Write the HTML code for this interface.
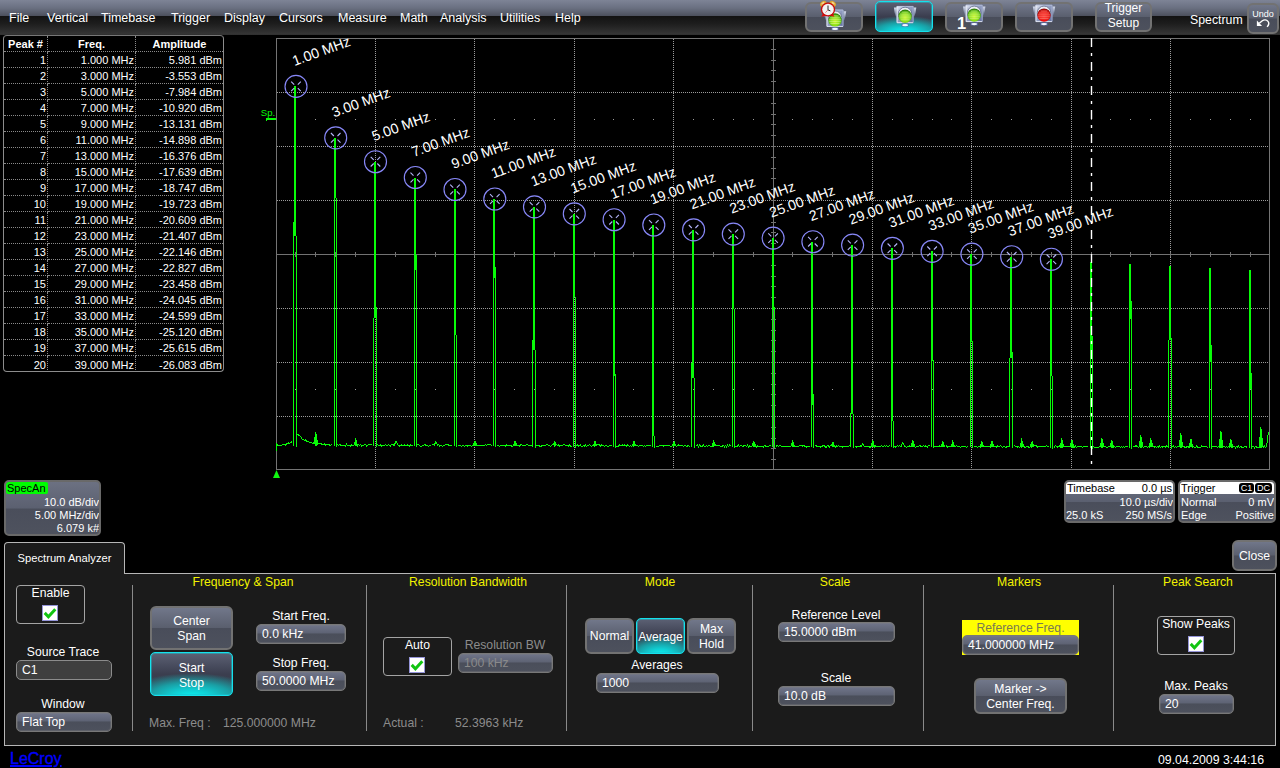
<!DOCTYPE html>
<html lang="en"><head><meta charset="utf-8"><title>LeCroy Spectrum Analyzer</title>
<style>
html,body{margin:0;padding:0;}
body{width:1280px;height:768px;overflow:hidden;background:#000;color:#fff;position:relative;
 font-family:"Liberation Sans",sans-serif;font-size:12.2px;line-height:16px;}
.abs,#menubar,#menubar span,.btn,.fld,.lbl,.hd,.sep,.box,.chk,#graph,#peaks,#panel,#tab,.info{position:absolute;box-sizing:border-box;}
#menubar{left:0;top:0;width:1280px;height:35px;overflow:visible;
 background:linear-gradient(to bottom,#7e8496 0px,#6a7081 8px,#4e525f 15.5px,#131313 16.5px,#1e1e1e 24px,#353535 34px,#2c2c2c 35px);}
#menubar span.mi{top:10px;font-size:12.5px;color:#fff;white-space:nowrap;}
.btn{border:2px solid #727272;border-radius:6px;background-clip:padding-box;color:#fff;text-align:center;white-space:nowrap;display:flex;flex-direction:column;justify-content:center;align-items:center;
 background:linear-gradient(to bottom,#71778a 0%,#5a5f6e 49%,#494d5a 51%,#4d515d 100%);}
.btn.on{border:1px solid #14e2ec;box-shadow:inset 0 0 0 1px rgba(30,190,205,.5);border-radius:5px;
 background:radial-gradient(ellipse 85% 56% at 50% 104%,#08f4f4 0%,#10cdd2 30%,#1a9ea4 60%,rgba(40,80,92,0) 100%),
 linear-gradient(to bottom,#5c6174 0%,#3b3e4f 50%,#393c4a 100%);}
.fld{border:1px solid #787878;box-shadow:inset 0 0 0 1px rgba(125,125,125,.35);border-radius:5px;color:#fff;padding-left:5px;white-space:nowrap;
 background:linear-gradient(to bottom,#70758a 0%,#5e6374 44%,#4a4e5a 50%,#4d515d 100%);font-size:12.2px;line-height:17px;padding-top:1px;}
.fld.dark{background:#3f3f3f;border-color:#8c8c8c;box-shadow:none;}
.fld.dis{color:#8a8a8a;}
.lbl{color:#fff;text-align:center;white-space:nowrap;font-size:12.2px;line-height:15px;}
.lbl.g{color:#8c8c8c;}
.hd{color:#f2f200;text-align:center;white-space:nowrap;font-size:12.2px;line-height:15px;}
.sep{width:1px;top:585px;height:146px;background:#8a8a8a;}
.box{border:1px solid #a4a4a4;border-radius:4px;background:transparent;}
.chk{width:16px;height:16px;background:#fff;border:1px solid #9494d8;}
.chk svg{position:absolute;left:0;top:0;}
#panel{left:4px;top:573px;width:1272px;height:173px;background:#1b1b1b;border:1px solid #b6b6b6;}
#tab{left:4px;top:542px;width:121px;height:32px;background:#1b1b1b;border:1px solid #b6b6b6;border-bottom:none;border-radius:4px 4px 0 0;
 text-align:center;font-size:11.2px;line-height:30px;color:#fff;}
#graph{left:0;top:0;}
#graph text{font-family:"Liberation Sans",sans-serif;}
#graph text.pk{font-size:14.2px;fill:#fff;}
#peaks{left:3px;top:35px;width:221px;height:337px;border:1px solid #8c8c8c;border-top-color:#777;border-radius:4px;overflow:hidden;background:#000;}
#peaks table{border-collapse:separate;border-spacing:0;table-layout:fixed;width:219px;position:absolute;left:0;top:0;}
#peaks td,#peaks th{height:16px;padding:2px 1px 0 0;font-size:11px;line-height:13px;text-align:right;color:#fff;white-space:nowrap;
 border-right:1px dotted #8a8a8a;border-bottom:1px dotted #8a8a8a;box-sizing:border-box;overflow:hidden;}
#peaks th{text-align:center;font-weight:bold;padding:2px 0 0 0;}
#peaks td:last-child,#peaks th:last-child{border-right:none;}
#peaks tr:last-child td{border-bottom:none;}
.info{border:2px solid #696969;border-radius:5px;background-clip:padding-box;font-size:11px;line-height:12px;color:#fff;overflow:hidden;
 background:linear-gradient(to bottom,#6c7182 0%,#5b6070 50%,#4a4e5b 52%,#4e525e 100%);}
.info span{position:absolute;white-space:nowrap;}

</style></head>
<body>
<div id="menubar">
<span class="mi" style="left:9px">File</span>
<span class="mi" style="left:47px">Vertical</span>
<span class="mi" style="left:101px">Timebase</span>
<span class="mi" style="left:171px">Trigger</span>
<span class="mi" style="left:224px">Display</span>
<span class="mi" style="left:279px">Cursors</span>
<span class="mi" style="left:338px">Measure</span>
<span class="mi" style="left:400px">Math</span>
<span class="mi" style="left:440px">Analysis</span>
<span class="mi" style="left:500px">Utilities</span>
<span class="mi" style="left:555px">Help</span>
<div class="btn" style="left:805px;top:2px;width:58px;height:30px"></div>
<div class="btn on" style="left:875px;top:1px;width:58px;height:31px"></div>
<div class="btn" style="left:945px;top:2px;width:58px;height:30px"></div>
<div class="btn" style="left:1015px;top:2px;width:58px;height:30px"></div>
<div class="btn" style="left:1095px;top:2px;width:57px;height:30px;font-size:12px;line-height:15px;padding-bottom:2px">Trigger<br>Setup</div>
<span class="mi" style="left:1190px;top:12px;font-size:12.3px">Spectrum</span>
<div class="btn" style="left:1247px;top:3px;width:32px;height:31px;font-size:9px;line-height:11px;justify-content:flex-start;padding-top:4px">Undo</div>
<span class="abs" style="left:957px;top:15px;font-size:16.5px;line-height:17px;font-weight:bold;color:#fff">1</span>
<svg class="abs" style="left:800px;top:0" width="480" height="36" viewBox="800 0 480 36">
<defs>
<linearGradient id="tlb" x1="0" y1="0" x2="1" y2="1"><stop offset="0" stop-color="#f0f3fb"/><stop offset="0.3" stop-color="#a2accb"/><stop offset="1" stop-color="#5d6c9b"/></linearGradient>
<linearGradient id="ear" x1="0" y1="0" x2="0" y2="1"><stop offset="0" stop-color="#d4dbec"/><stop offset="1" stop-color="#5c6886"/></linearGradient>
<radialGradient id="lg" cx="0.5" cy="0.62" r="0.56"><stop offset="0" stop-color="#c8f626"/><stop offset="0.55" stop-color="#8ee018"/><stop offset="0.85" stop-color="#56b60e"/><stop offset="1" stop-color="#2f7f0a"/></radialGradient>
<radialGradient id="lr" cx="0.5" cy="0.6" r="0.56"><stop offset="0" stop-color="#ff2a2a"/><stop offset="0.6" stop-color="#f00c0c"/><stop offset="0.88" stop-color="#c40808"/><stop offset="1" stop-color="#860606"/></radialGradient>
<g id="tlbody">
<path d="M0.6,1.6 L3.4,1.6 L3.4,10.8 L2.4,10.4 L1.3,6.5 Z M23,1.6 L20.2,1.6 L20.2,10.8 L21.2,10.4 L22.3,6.5 Z" fill="url(#ear)"/>
<rect x="3.3" y="0" width="17" height="17.3" rx="0.9" fill="url(#tlb)"/>
<path d="M3.8,0.6 L3.8,16.8 L19.8,16.8" fill="none" stroke="#e9edf8" stroke-width="0.9"/>
<path d="M3.8,0.5 L19.8,0.5 L19.8,16.6" fill="none" stroke="#b8c2de" stroke-width="0.7"/>
<circle cx="11.8" cy="8.0" r="6.7" fill="#eceef5" stroke="#626c88" stroke-width="0.8"/>
<rect x="8.3" y="17.6" width="7" height="3" fill="#5a6cab"/>
<ellipse cx="11.8" cy="19.3" rx="3" ry="1.1" fill="#f4f7ff"/>
</g>
<g id="stripes" stroke="#f6ffd8" stroke-opacity="0.55" stroke-width="0.7">
<line x1="8.4" y1="6.3" x2="15.2" y2="6.3"/><line x1="6.6" y1="8.2" x2="17" y2="8.2"/><line x1="5.8" y1="10.1" x2="17.8" y2="10.1"/><line x1="6" y1="12" x2="17.6" y2="12"/><line x1="7.2" y1="13.9" x2="16.4" y2="13.9"/>
</g>
<g id="tlg"><use href="#tlbody"/><circle cx="11.8" cy="10.3" r="6.7" fill="url(#lg)"/><use href="#stripes"/></g>
<g id="tlr"><use href="#tlbody"/><circle cx="11.8" cy="10.3" r="6.7" fill="url(#lr)"/><use href="#stripes"/></g>
</defs>
<use href="#tlg" x="823.2" y="9.6"/>
<use href="#tlg" x="893.3" y="5.9"/>
<use href="#tlg" x="962.4" y="4.8"/>
<use href="#tlr" x="1032.2" y="4.8"/>
<!-- alarm clock -->
<g transform="translate(828,9.5)">
<ellipse cx="-4.7" cy="-5.7" rx="3.5" ry="2.6" transform="rotate(-38 -4.7 -5.7)" fill="#dca432"/>
<ellipse cx="4.7" cy="-5.7" rx="3.5" ry="2.6" transform="rotate(38 4.7 -5.7)" fill="#dca432"/>
<ellipse cx="-5.1" cy="-6.3" rx="1.8" ry="1" transform="rotate(-38 -5.1 -6.3)" fill="#f2d58c"/>
<ellipse cx="5.1" cy="-6.3" rx="1.8" ry="1" transform="rotate(38 5.1 -6.3)" fill="#f2d58c"/>
<path d="M-4.6,3.6 L-6.8,7.2 L-2.8,6.4 Z M4.6,3.6 L6.4,7.2 L2.8,6.4 Z" fill="#e00c0c"/>
<circle r="7.1" fill="#c80a0a"/>
<circle r="5.8" fill="#f3f4f4"/>
<path d="M0,0.4 L0,-4 M0,0.4 L2.4,1.4" stroke="#2a2a2a" stroke-width="1" fill="none"/>
<path d="M0,0.4 L-2.6,3.2" stroke="#e04040" stroke-width="0.6" fill="none"/>
</g>
<!-- undo arrow -->
<path d="M1256.9,20.6 L1256.9,25.9 L1262.1,25.9 Z" fill="#ffffff"/><path d="M1259.3,23.3 L1262.3,20.8 C1264,19.6 1266.6,19.8 1268,21.4 C1269.4,23 1268.6,25.2 1267.1,26.9" fill="none" stroke="#ffffff" stroke-width="1.4"/>
</svg>
</div>
<div id="peaks"><table>
<colgroup><col style="width:44px"><col style="width:88px"><col style="width:87px"></colgroup>
<tr><th>Peak #</th><th>Freq.</th><th>Amplitude</th></tr>
<tr><td>1</td><td>1.000 MHz</td><td>5.981 dBm</td></tr>
<tr><td>2</td><td>3.000 MHz</td><td>-3.553 dBm</td></tr>
<tr><td>3</td><td>5.000 MHz</td><td>-7.984 dBm</td></tr>
<tr><td>4</td><td>7.000 MHz</td><td>-10.920 dBm</td></tr>
<tr><td>5</td><td>9.000 MHz</td><td>-13.131 dBm</td></tr>
<tr><td>6</td><td>11.000 MHz</td><td>-14.898 dBm</td></tr>
<tr><td>7</td><td>13.000 MHz</td><td>-16.376 dBm</td></tr>
<tr><td>8</td><td>15.000 MHz</td><td>-17.639 dBm</td></tr>
<tr><td>9</td><td>17.000 MHz</td><td>-18.747 dBm</td></tr>
<tr><td>10</td><td>19.000 MHz</td><td>-19.723 dBm</td></tr>
<tr><td>11</td><td>21.000 MHz</td><td>-20.609 dBm</td></tr>
<tr><td>12</td><td>23.000 MHz</td><td>-21.407 dBm</td></tr>
<tr><td>13</td><td>25.000 MHz</td><td>-22.146 dBm</td></tr>
<tr><td>14</td><td>27.000 MHz</td><td>-22.827 dBm</td></tr>
<tr><td>15</td><td>29.000 MHz</td><td>-23.458 dBm</td></tr>
<tr><td>16</td><td>31.000 MHz</td><td>-24.045 dBm</td></tr>
<tr><td>17</td><td>33.000 MHz</td><td>-24.599 dBm</td></tr>
<tr><td>18</td><td>35.000 MHz</td><td>-25.120 dBm</td></tr>
<tr><td>19</td><td>37.000 MHz</td><td>-25.615 dBm</td></tr>
<tr><td>20</td><td>39.000 MHz</td><td>-26.083 dBm</td></tr>
</table></div>
<svg id="graph" width="1280" height="480" viewBox="0 0 1280 480">
<g shape-rendering="crispEdges" fill="none">
<line x1="375.5" y1="39" x2="375.5" y2="469" stroke="#9c9c9c" stroke-dasharray="1 1"/>
<line x1="474.5" y1="39" x2="474.5" y2="469" stroke="#9c9c9c" stroke-dasharray="1 1"/>
<line x1="574.5" y1="39" x2="574.5" y2="469" stroke="#9c9c9c" stroke-dasharray="1 1"/>
<line x1="673.5" y1="39" x2="673.5" y2="469" stroke="#9c9c9c" stroke-dasharray="1 1"/>
<line x1="872.5" y1="39" x2="872.5" y2="469" stroke="#9c9c9c" stroke-dasharray="1 1"/>
<line x1="971.5" y1="39" x2="971.5" y2="469" stroke="#9c9c9c" stroke-dasharray="1 1"/>
<line x1="1071.5" y1="39" x2="1071.5" y2="469" stroke="#9c9c9c" stroke-dasharray="1 1"/>
<line x1="1170.5" y1="39" x2="1170.5" y2="469" stroke="#9c9c9c" stroke-dasharray="1 1"/>
<line x1="277" y1="92.5" x2="1269" y2="92.5" stroke="#9c9c9c" stroke-dasharray="1 1"/>
<line x1="277" y1="146.5" x2="1269" y2="146.5" stroke="#9c9c9c" stroke-dasharray="1 1"/>
<line x1="277" y1="200.5" x2="1269" y2="200.5" stroke="#9c9c9c" stroke-dasharray="1 1"/>
<line x1="277" y1="308.5" x2="1269" y2="308.5" stroke="#9c9c9c" stroke-dasharray="1 1"/>
<line x1="277" y1="362.5" x2="1269" y2="362.5" stroke="#9c9c9c" stroke-dasharray="1 1"/>
<line x1="277" y1="416.5" x2="1269" y2="416.5" stroke="#9c9c9c" stroke-dasharray="1 1"/>
<rect x="295" y="119" width="1" height="1" fill="#9c9c9c"/>
<rect x="315" y="119" width="1" height="1" fill="#9c9c9c"/>
<rect x="335" y="119" width="1" height="1" fill="#9c9c9c"/>
<rect x="355" y="119" width="1" height="1" fill="#9c9c9c"/>
<rect x="395" y="119" width="1" height="1" fill="#9c9c9c"/>
<rect x="415" y="119" width="1" height="1" fill="#9c9c9c"/>
<rect x="435" y="119" width="1" height="1" fill="#9c9c9c"/>
<rect x="454" y="119" width="1" height="1" fill="#9c9c9c"/>
<rect x="494" y="119" width="1" height="1" fill="#9c9c9c"/>
<rect x="514" y="119" width="1" height="1" fill="#9c9c9c"/>
<rect x="534" y="119" width="1" height="1" fill="#9c9c9c"/>
<rect x="554" y="119" width="1" height="1" fill="#9c9c9c"/>
<rect x="594" y="119" width="1" height="1" fill="#9c9c9c"/>
<rect x="613" y="119" width="1" height="1" fill="#9c9c9c"/>
<rect x="633" y="119" width="1" height="1" fill="#9c9c9c"/>
<rect x="653" y="119" width="1" height="1" fill="#9c9c9c"/>
<rect x="693" y="119" width="1" height="1" fill="#9c9c9c"/>
<rect x="713" y="119" width="1" height="1" fill="#9c9c9c"/>
<rect x="733" y="119" width="1" height="1" fill="#9c9c9c"/>
<rect x="753" y="119" width="1" height="1" fill="#9c9c9c"/>
<rect x="792" y="119" width="1" height="1" fill="#9c9c9c"/>
<rect x="812" y="119" width="1" height="1" fill="#9c9c9c"/>
<rect x="832" y="119" width="1" height="1" fill="#9c9c9c"/>
<rect x="852" y="119" width="1" height="1" fill="#9c9c9c"/>
<rect x="892" y="119" width="1" height="1" fill="#9c9c9c"/>
<rect x="912" y="119" width="1" height="1" fill="#9c9c9c"/>
<rect x="932" y="119" width="1" height="1" fill="#9c9c9c"/>
<rect x="951" y="119" width="1" height="1" fill="#9c9c9c"/>
<rect x="991" y="119" width="1" height="1" fill="#9c9c9c"/>
<rect x="1011" y="119" width="1" height="1" fill="#9c9c9c"/>
<rect x="1031" y="119" width="1" height="1" fill="#9c9c9c"/>
<rect x="1051" y="119" width="1" height="1" fill="#9c9c9c"/>
<rect x="1091" y="119" width="1" height="1" fill="#9c9c9c"/>
<rect x="1110" y="119" width="1" height="1" fill="#9c9c9c"/>
<rect x="1130" y="119" width="1" height="1" fill="#9c9c9c"/>
<rect x="1150" y="119" width="1" height="1" fill="#9c9c9c"/>
<rect x="1190" y="119" width="1" height="1" fill="#9c9c9c"/>
<rect x="1210" y="119" width="1" height="1" fill="#9c9c9c"/>
<rect x="1230" y="119" width="1" height="1" fill="#9c9c9c"/>
<rect x="1250" y="119" width="1" height="1" fill="#9c9c9c"/>
<rect x="295" y="389" width="1" height="1" fill="#9c9c9c"/>
<rect x="315" y="389" width="1" height="1" fill="#9c9c9c"/>
<rect x="335" y="389" width="1" height="1" fill="#9c9c9c"/>
<rect x="355" y="389" width="1" height="1" fill="#9c9c9c"/>
<rect x="395" y="389" width="1" height="1" fill="#9c9c9c"/>
<rect x="415" y="389" width="1" height="1" fill="#9c9c9c"/>
<rect x="435" y="389" width="1" height="1" fill="#9c9c9c"/>
<rect x="454" y="389" width="1" height="1" fill="#9c9c9c"/>
<rect x="494" y="389" width="1" height="1" fill="#9c9c9c"/>
<rect x="514" y="389" width="1" height="1" fill="#9c9c9c"/>
<rect x="534" y="389" width="1" height="1" fill="#9c9c9c"/>
<rect x="554" y="389" width="1" height="1" fill="#9c9c9c"/>
<rect x="594" y="389" width="1" height="1" fill="#9c9c9c"/>
<rect x="613" y="389" width="1" height="1" fill="#9c9c9c"/>
<rect x="633" y="389" width="1" height="1" fill="#9c9c9c"/>
<rect x="653" y="389" width="1" height="1" fill="#9c9c9c"/>
<rect x="693" y="389" width="1" height="1" fill="#9c9c9c"/>
<rect x="713" y="389" width="1" height="1" fill="#9c9c9c"/>
<rect x="733" y="389" width="1" height="1" fill="#9c9c9c"/>
<rect x="753" y="389" width="1" height="1" fill="#9c9c9c"/>
<rect x="792" y="389" width="1" height="1" fill="#9c9c9c"/>
<rect x="812" y="389" width="1" height="1" fill="#9c9c9c"/>
<rect x="832" y="389" width="1" height="1" fill="#9c9c9c"/>
<rect x="852" y="389" width="1" height="1" fill="#9c9c9c"/>
<rect x="892" y="389" width="1" height="1" fill="#9c9c9c"/>
<rect x="912" y="389" width="1" height="1" fill="#9c9c9c"/>
<rect x="932" y="389" width="1" height="1" fill="#9c9c9c"/>
<rect x="951" y="389" width="1" height="1" fill="#9c9c9c"/>
<rect x="991" y="389" width="1" height="1" fill="#9c9c9c"/>
<rect x="1011" y="389" width="1" height="1" fill="#9c9c9c"/>
<rect x="1031" y="389" width="1" height="1" fill="#9c9c9c"/>
<rect x="1051" y="389" width="1" height="1" fill="#9c9c9c"/>
<rect x="1091" y="389" width="1" height="1" fill="#9c9c9c"/>
<rect x="1110" y="389" width="1" height="1" fill="#9c9c9c"/>
<rect x="1130" y="389" width="1" height="1" fill="#9c9c9c"/>
<rect x="1150" y="389" width="1" height="1" fill="#9c9c9c"/>
<rect x="1190" y="389" width="1" height="1" fill="#9c9c9c"/>
<rect x="1210" y="389" width="1" height="1" fill="#9c9c9c"/>
<rect x="1230" y="389" width="1" height="1" fill="#9c9c9c"/>
<rect x="1250" y="389" width="1" height="1" fill="#9c9c9c"/>
<line x1="773.5" y1="39" x2="773.5" y2="469" stroke="#727272"/>
<line x1="277" y1="254.5" x2="1269" y2="254.5" stroke="#727272"/>
<line x1="295.5" y1="252.0" x2="295.5" y2="257.0" stroke="#727272"/>
<line x1="315.5" y1="252.0" x2="315.5" y2="257.0" stroke="#727272"/>
<line x1="335.5" y1="252.0" x2="335.5" y2="257.0" stroke="#727272"/>
<line x1="355.5" y1="252.0" x2="355.5" y2="257.0" stroke="#727272"/>
<line x1="375.5" y1="252.0" x2="375.5" y2="257.0" stroke="#727272"/>
<line x1="395.5" y1="252.0" x2="395.5" y2="257.0" stroke="#727272"/>
<line x1="415.5" y1="252.0" x2="415.5" y2="257.0" stroke="#727272"/>
<line x1="435.5" y1="252.0" x2="435.5" y2="257.0" stroke="#727272"/>
<line x1="454.5" y1="252.0" x2="454.5" y2="257.0" stroke="#727272"/>
<line x1="474.5" y1="252.0" x2="474.5" y2="257.0" stroke="#727272"/>
<line x1="494.5" y1="252.0" x2="494.5" y2="257.0" stroke="#727272"/>
<line x1="514.5" y1="252.0" x2="514.5" y2="257.0" stroke="#727272"/>
<line x1="534.5" y1="252.0" x2="534.5" y2="257.0" stroke="#727272"/>
<line x1="554.5" y1="252.0" x2="554.5" y2="257.0" stroke="#727272"/>
<line x1="574.5" y1="252.0" x2="574.5" y2="257.0" stroke="#727272"/>
<line x1="594.5" y1="252.0" x2="594.5" y2="257.0" stroke="#727272"/>
<line x1="613.5" y1="252.0" x2="613.5" y2="257.0" stroke="#727272"/>
<line x1="633.5" y1="252.0" x2="633.5" y2="257.0" stroke="#727272"/>
<line x1="653.5" y1="252.0" x2="653.5" y2="257.0" stroke="#727272"/>
<line x1="673.5" y1="252.0" x2="673.5" y2="257.0" stroke="#727272"/>
<line x1="693.5" y1="252.0" x2="693.5" y2="257.0" stroke="#727272"/>
<line x1="713.5" y1="252.0" x2="713.5" y2="257.0" stroke="#727272"/>
<line x1="733.5" y1="252.0" x2="733.5" y2="257.0" stroke="#727272"/>
<line x1="753.5" y1="252.0" x2="753.5" y2="257.0" stroke="#727272"/>
<line x1="773.5" y1="252.0" x2="773.5" y2="257.0" stroke="#727272"/>
<line x1="792.5" y1="252.0" x2="792.5" y2="257.0" stroke="#727272"/>
<line x1="812.5" y1="252.0" x2="812.5" y2="257.0" stroke="#727272"/>
<line x1="832.5" y1="252.0" x2="832.5" y2="257.0" stroke="#727272"/>
<line x1="852.5" y1="252.0" x2="852.5" y2="257.0" stroke="#727272"/>
<line x1="872.5" y1="252.0" x2="872.5" y2="257.0" stroke="#727272"/>
<line x1="892.5" y1="252.0" x2="892.5" y2="257.0" stroke="#727272"/>
<line x1="912.5" y1="252.0" x2="912.5" y2="257.0" stroke="#727272"/>
<line x1="932.5" y1="252.0" x2="932.5" y2="257.0" stroke="#727272"/>
<line x1="951.5" y1="252.0" x2="951.5" y2="257.0" stroke="#727272"/>
<line x1="971.5" y1="252.0" x2="971.5" y2="257.0" stroke="#727272"/>
<line x1="991.5" y1="252.0" x2="991.5" y2="257.0" stroke="#727272"/>
<line x1="1011.5" y1="252.0" x2="1011.5" y2="257.0" stroke="#727272"/>
<line x1="1031.5" y1="252.0" x2="1031.5" y2="257.0" stroke="#727272"/>
<line x1="1051.5" y1="252.0" x2="1051.5" y2="257.0" stroke="#727272"/>
<line x1="1071.5" y1="252.0" x2="1071.5" y2="257.0" stroke="#727272"/>
<line x1="1091.5" y1="252.0" x2="1091.5" y2="257.0" stroke="#727272"/>
<line x1="1110.5" y1="252.0" x2="1110.5" y2="257.0" stroke="#727272"/>
<line x1="1130.5" y1="252.0" x2="1130.5" y2="257.0" stroke="#727272"/>
<line x1="1150.5" y1="252.0" x2="1150.5" y2="257.0" stroke="#727272"/>
<line x1="1170.5" y1="252.0" x2="1170.5" y2="257.0" stroke="#727272"/>
<line x1="1190.5" y1="252.0" x2="1190.5" y2="257.0" stroke="#727272"/>
<line x1="1210.5" y1="252.0" x2="1210.5" y2="257.0" stroke="#727272"/>
<line x1="1230.5" y1="252.0" x2="1230.5" y2="257.0" stroke="#727272"/>
<line x1="1250.5" y1="252.0" x2="1250.5" y2="257.0" stroke="#727272"/>
<line x1="771.0" y1="49.5" x2="776.0" y2="49.5" stroke="#727272"/>
<line x1="771.0" y1="60.5" x2="776.0" y2="60.5" stroke="#727272"/>
<line x1="771.0" y1="70.5" x2="776.0" y2="70.5" stroke="#727272"/>
<line x1="771.0" y1="81.5" x2="776.0" y2="81.5" stroke="#727272"/>
<line x1="771.0" y1="92.5" x2="776.0" y2="92.5" stroke="#727272"/>
<line x1="771.0" y1="103.5" x2="776.0" y2="103.5" stroke="#727272"/>
<line x1="771.0" y1="114.5" x2="776.0" y2="114.5" stroke="#727272"/>
<line x1="771.0" y1="124.5" x2="776.0" y2="124.5" stroke="#727272"/>
<line x1="771.0" y1="135.5" x2="776.0" y2="135.5" stroke="#727272"/>
<line x1="771.0" y1="146.5" x2="776.0" y2="146.5" stroke="#727272"/>
<line x1="771.0" y1="157.5" x2="776.0" y2="157.5" stroke="#727272"/>
<line x1="771.0" y1="168.5" x2="776.0" y2="168.5" stroke="#727272"/>
<line x1="771.0" y1="178.5" x2="776.0" y2="178.5" stroke="#727272"/>
<line x1="771.0" y1="189.5" x2="776.0" y2="189.5" stroke="#727272"/>
<line x1="771.0" y1="200.5" x2="776.0" y2="200.5" stroke="#727272"/>
<line x1="771.0" y1="211.5" x2="776.0" y2="211.5" stroke="#727272"/>
<line x1="771.0" y1="222.5" x2="776.0" y2="222.5" stroke="#727272"/>
<line x1="771.0" y1="232.5" x2="776.0" y2="232.5" stroke="#727272"/>
<line x1="771.0" y1="243.5" x2="776.0" y2="243.5" stroke="#727272"/>
<line x1="771.0" y1="254.5" x2="776.0" y2="254.5" stroke="#727272"/>
<line x1="771.0" y1="265.5" x2="776.0" y2="265.5" stroke="#727272"/>
<line x1="771.0" y1="276.5" x2="776.0" y2="276.5" stroke="#727272"/>
<line x1="771.0" y1="286.5" x2="776.0" y2="286.5" stroke="#727272"/>
<line x1="771.0" y1="297.5" x2="776.0" y2="297.5" stroke="#727272"/>
<line x1="771.0" y1="308.5" x2="776.0" y2="308.5" stroke="#727272"/>
<line x1="771.0" y1="319.5" x2="776.0" y2="319.5" stroke="#727272"/>
<line x1="771.0" y1="330.5" x2="776.0" y2="330.5" stroke="#727272"/>
<line x1="771.0" y1="340.5" x2="776.0" y2="340.5" stroke="#727272"/>
<line x1="771.0" y1="351.5" x2="776.0" y2="351.5" stroke="#727272"/>
<line x1="771.0" y1="362.5" x2="776.0" y2="362.5" stroke="#727272"/>
<line x1="771.0" y1="373.5" x2="776.0" y2="373.5" stroke="#727272"/>
<line x1="771.0" y1="384.5" x2="776.0" y2="384.5" stroke="#727272"/>
<line x1="771.0" y1="394.5" x2="776.0" y2="394.5" stroke="#727272"/>
<line x1="771.0" y1="405.5" x2="776.0" y2="405.5" stroke="#727272"/>
<line x1="771.0" y1="416.5" x2="776.0" y2="416.5" stroke="#727272"/>
<line x1="771.0" y1="427.5" x2="776.0" y2="427.5" stroke="#727272"/>
<line x1="771.0" y1="438.5" x2="776.0" y2="438.5" stroke="#727272"/>
<line x1="771.0" y1="448.5" x2="776.0" y2="448.5" stroke="#727272"/>
<line x1="771.0" y1="459.5" x2="776.0" y2="459.5" stroke="#727272"/>
<rect x="276.5" y="38.5" width="993" height="431" stroke="#747474"/>
</g>
<polyline points="276.5,451.0 276.5,444.0 277.5,445.0 278.5,445.9 279.5,445.2 280.5,445.6 281.5,445.5 282.5,444.5 283.5,444.4 284.5,444.4 285.5,445.0 286.5,444.1 287.5,443.3 288.5,443.0 289.5,443.8 290.5,442.7 291.5,441.9 292.5,441.7" fill="none" stroke="#08fa08" stroke-width="1" shape-rendering="crispEdges"/>
<polyline points="297.5,433.8 298.5,435.0 299.5,435.8 300.5,436.2 301.5,438.1 302.5,439.5 303.5,439.8 304.5,440.4 305.5,439.6 306.5,441.1 307.5,441.4 308.5,441.8 309.5,442.6 310.5,442.9 311.5,442.9 312.5,443.5 313.5,442.9 314.5,443.6 315.5,431.8 316.5,435.3 317.5,444.1 318.5,443.2 319.5,443.3 320.5,443.4 321.5,444.0 322.5,444.1 323.5,444.7 324.5,443.7 325.5,445.5 326.5,444.7 327.5,444.7 328.5,444.7 329.5,445.0 330.5,445.7 331.5,444.6 332.5,445.1" fill="none" stroke="#08fa08" stroke-width="1" shape-rendering="crispEdges"/>
<polyline points="337.5,444.2 338.5,445.5 339.5,444.2 340.5,445.1 341.5,445.6 342.5,445.1 343.5,445.1 344.5,445.3 345.5,446.0 346.5,444.3 347.5,445.6 348.5,445.1 349.5,445.1 350.5,446.0 351.5,444.9 352.5,445.4 353.5,445.2 354.5,444.4 355.5,439.4 356.5,441.1 357.5,446.1 358.5,444.4 359.5,445.2 360.5,444.4 361.5,446.1 362.5,445.2 363.5,445.2 364.5,444.4 365.5,444.4 366.5,446.1 367.5,445.7 368.5,444.4 369.5,444.9 370.5,444.9 371.5,444.4 372.5,445.2" fill="none" stroke="#08fa08" stroke-width="1" shape-rendering="crispEdges"/>
<polyline points="377.5,444.4 378.5,445.4 379.5,445.7 380.5,444.9 381.5,446.1 382.5,445.7 383.5,445.2 384.5,445.2 385.5,444.4 386.5,445.2 387.5,445.2 388.5,444.4 389.5,445.2 390.5,446.1 391.5,444.4 392.5,444.9 393.5,444.9 394.5,445.7 395.5,441.4 396.5,441.9 397.5,444.4 398.5,445.2 399.5,446.1 400.5,445.2 401.5,445.0 402.5,445.8 403.5,445.5 404.5,445.0 405.5,445.3 406.5,445.5 407.5,445.0 408.5,445.8 409.5,446.2 410.5,445.0 411.5,445.3 412.5,445.8" fill="none" stroke="#08fa08" stroke-width="1" shape-rendering="crispEdges"/>
<polyline points="417.5,445.0 418.5,444.5 419.5,445.3 420.5,446.2 421.5,446.2 422.5,445.5 423.5,445.3 424.5,444.5 425.5,445.0 426.5,445.0 427.5,445.3 428.5,446.2 429.5,445.5 430.5,445.8 431.5,445.5 432.5,444.5 433.5,444.5 434.5,445.0 435.5,442.0 436.5,442.8 437.5,445.3 438.5,444.5 439.5,446.2 440.5,445.5 441.5,445.3 442.5,446.2 443.5,445.3 444.5,445.3 445.5,444.5 446.5,444.5 447.5,444.5 448.5,445.0 449.5,445.5 450.5,445.9 451.5,445.1 452.5,444.6" fill="none" stroke="#08fa08" stroke-width="1" shape-rendering="crispEdges"/>
<polyline points="457.5,445.4 458.5,445.1 459.5,445.6 460.5,445.4 461.5,446.3 462.5,445.6 463.5,445.1 464.5,446.3 465.5,445.4 466.5,445.1 467.5,445.9 468.5,445.1 469.5,445.4 470.5,445.1 471.5,446.3 472.5,445.6 473.5,445.1 474.5,441.9 475.5,441.7 476.5,445.1 477.5,445.9 478.5,445.9 479.5,445.6 480.5,445.1 481.5,445.9 482.5,445.4 483.5,445.4 484.5,445.6 485.5,444.6 486.5,445.4 487.5,444.6 488.5,444.6 489.5,444.6 490.5,444.6 491.5,445.6" fill="none" stroke="#08fa08" stroke-width="1" shape-rendering="crispEdges"/>
<polyline points="496.5,445.4 497.5,445.4 498.5,445.4 499.5,446.3 500.5,445.7 501.5,445.5 502.5,445.5 503.5,445.7 504.5,445.2 505.5,446.0 506.5,444.7 507.5,445.2 508.5,445.2 509.5,445.5 510.5,445.7 511.5,446.0 512.5,446.4 513.5,445.7 514.5,441.7 515.5,441.3 516.5,445.5 517.5,445.2 518.5,445.2 519.5,446.0 520.5,444.7 521.5,444.7 522.5,445.5 523.5,445.5 524.5,445.5 525.5,445.2 526.5,444.7 527.5,444.7 528.5,445.2 529.5,445.5 530.5,445.5 531.5,445.7" fill="none" stroke="#08fa08" stroke-width="1" shape-rendering="crispEdges"/>
<polyline points="536.5,445.2 537.5,445.5 538.5,445.5 539.5,446.0 540.5,446.0 541.5,446.0 542.5,445.7 543.5,445.7 544.5,445.2 545.5,445.7 546.5,444.7 547.5,444.7 548.5,445.5 549.5,445.5 550.5,446.1 551.5,445.6 552.5,444.8 553.5,444.8 554.5,441.8 555.5,442.7 556.5,444.8 557.5,445.6 558.5,444.8 559.5,446.1 560.5,445.6 561.5,445.6 562.5,445.3 563.5,444.8 564.5,444.8 565.5,445.6 566.5,445.8 567.5,445.6 568.5,446.1 569.5,444.8 570.5,446.1 571.5,446.1" fill="none" stroke="#08fa08" stroke-width="1" shape-rendering="crispEdges"/>
<polyline points="576.5,445.6 577.5,444.8 578.5,446.1 579.5,445.6 580.5,444.8 581.5,446.5 582.5,446.5 583.5,445.6 584.5,446.5 585.5,444.8 586.5,446.5 587.5,445.6 588.5,445.8 589.5,444.8 590.5,445.8 591.5,446.1 592.5,445.6 593.5,445.6 594.5,441.8 595.5,441.4 596.5,445.8 597.5,444.8 598.5,444.8 599.5,444.9 600.5,446.2 601.5,444.9 602.5,445.7 603.5,445.7 604.5,446.2 605.5,445.7 606.5,445.7 607.5,446.2 608.5,446.2 609.5,445.9 610.5,445.7 611.5,445.7" fill="none" stroke="#08fa08" stroke-width="1" shape-rendering="crispEdges"/>
<polyline points="616.5,445.9 617.5,446.6 618.5,445.9 619.5,444.9 620.5,445.7 621.5,445.9 622.5,444.9 623.5,445.7 624.5,444.9 625.5,445.4 626.5,446.2 627.5,444.9 628.5,445.7 629.5,446.6 630.5,445.9 631.5,446.2 632.5,445.7 633.5,441.7 634.5,441.5 635.5,445.7 636.5,445.7 637.5,445.4 638.5,446.2 639.5,445.9 640.5,445.4 641.5,445.9 642.5,445.4 643.5,446.6 644.5,445.7 645.5,446.2 646.5,445.7 647.5,445.7 648.5,445.4 649.5,445.8 650.5,445.8" fill="none" stroke="#08fa08" stroke-width="1" shape-rendering="crispEdges"/>
<polyline points="655.5,445.8 656.5,446.7 657.5,446.7 658.5,446.7 659.5,445.5 660.5,445.5 661.5,445.8 662.5,445.5 663.5,446.0 664.5,445.8 665.5,445.5 666.5,445.5 667.5,445.5 668.5,445.8 669.5,445.8 670.5,446.7 671.5,446.7 672.5,445.0 673.5,442.3 674.5,441.6 675.5,445.8 676.5,446.7 677.5,445.5 678.5,445.0 679.5,445.8 680.5,445.8 681.5,445.8 682.5,445.5 683.5,446.7 684.5,445.8 685.5,445.8 686.5,446.3 687.5,446.0 688.5,445.8 689.5,446.3 690.5,445.8" fill="none" stroke="#08fa08" stroke-width="1" shape-rendering="crispEdges"/>
<polyline points="695.5,445.8 696.5,445.8 697.5,445.0 698.5,446.7 699.5,445.1 700.5,445.9 701.5,446.8 702.5,446.1 703.5,445.1 704.5,446.4 705.5,446.4 706.5,445.9 707.5,446.1 708.5,445.9 709.5,445.9 710.5,446.4 711.5,446.8 712.5,446.1 713.5,441.1 714.5,443.0 715.5,445.6 716.5,445.9 717.5,445.9 718.5,445.6 719.5,445.1 720.5,446.8 721.5,446.8 722.5,445.9 723.5,445.6 724.5,446.8 725.5,445.6 726.5,446.8 727.5,445.1 728.5,446.4 729.5,445.1 730.5,445.9" fill="none" stroke="#08fa08" stroke-width="1" shape-rendering="crispEdges"/>
<polyline points="735.5,446.4 736.5,446.8 737.5,445.9 738.5,445.1 739.5,446.4 740.5,445.6 741.5,445.6 742.5,446.8 743.5,445.9 744.5,445.9 745.5,445.6 746.5,446.4 747.5,445.1 748.5,446.9 749.5,446.0 750.5,446.2 751.5,446.5 752.5,445.2 753.5,441.7 754.5,442.3 755.5,446.0 756.5,446.9 757.5,446.0 758.5,446.2 759.5,446.5 760.5,446.2 761.5,446.2 762.5,446.2 763.5,446.9 764.5,445.7 765.5,446.0 766.5,446.9 767.5,446.9 768.5,446.5 769.5,445.7 770.5,445.2" fill="none" stroke="#08fa08" stroke-width="1" shape-rendering="crispEdges"/>
<polyline points="775.5,446.0 776.5,446.0 777.5,445.7 778.5,446.5 779.5,445.2 780.5,446.0 781.5,446.2 782.5,446.2 783.5,446.5 784.5,446.2 785.5,446.9 786.5,446.9 787.5,446.0 788.5,446.0 789.5,446.0 790.5,446.5 791.5,445.7 792.5,441.2 793.5,443.1 794.5,446.9 795.5,446.9 796.5,446.9 797.5,446.5 798.5,446.6 799.5,445.3 800.5,445.8 801.5,445.8 802.5,446.1 803.5,445.3 804.5,446.1 805.5,446.3 806.5,447.0 807.5,446.1 808.5,446.1 809.5,446.6" fill="none" stroke="#08fa08" stroke-width="1" shape-rendering="crispEdges"/>
<polyline points="814.5,445.3 815.5,445.3 816.5,446.1 817.5,446.1 818.5,446.3 819.5,446.1 820.5,447.0 821.5,446.1 822.5,446.1 823.5,445.3 824.5,445.8 825.5,447.0 826.5,447.0 827.5,445.3 828.5,446.1 829.5,447.0 830.5,445.3 831.5,445.8 832.5,442.3 833.5,442.7 834.5,446.6 835.5,447.0 836.5,445.8 837.5,446.1 838.5,445.8 839.5,446.3 840.5,446.6 841.5,446.3 842.5,447.0 843.5,446.6 844.5,446.6 845.5,446.1 846.5,446.1 847.5,446.4 848.5,446.7 849.5,445.4" fill="none" stroke="#08fa08" stroke-width="1" shape-rendering="crispEdges"/>
<polyline points="854.5,446.4 855.5,446.2 856.5,447.1 857.5,446.7 858.5,446.4 859.5,446.7 860.5,445.9 861.5,446.4 862.5,443.9 863.5,445.0 864.5,446.4 865.5,446.2 866.5,446.2 867.5,446.7 868.5,446.2 869.5,447.1 870.5,447.1 871.5,446.4 872.5,440.9 873.5,442.0 874.5,447.1 875.5,445.9 876.5,446.4 877.5,446.4 878.5,446.2 879.5,446.4 880.5,446.2 881.5,445.9 882.5,446.2 883.5,446.4 884.5,445.4 885.5,446.4 886.5,445.4 887.5,446.4 888.5,446.2 889.5,445.4" fill="none" stroke="#08fa08" stroke-width="1" shape-rendering="crispEdges"/>
<polyline points="894.5,446.4 895.5,447.1 896.5,446.4 897.5,445.5 898.5,446.3 899.5,445.5 900.5,446.8 901.5,446.0 902.5,442.5 903.5,443.9 904.5,446.3 905.5,446.3 906.5,447.2 907.5,446.3 908.5,446.3 909.5,446.0 910.5,446.3 911.5,446.3 912.5,441.0 913.5,442.0 914.5,446.3 915.5,447.2 916.5,446.3 917.5,446.5 918.5,446.3 919.5,445.5 920.5,446.0 921.5,446.3 922.5,446.5 923.5,445.5 924.5,446.3 925.5,446.0 926.5,446.8 927.5,447.2 928.5,445.5 929.5,445.5" fill="none" stroke="#08fa08" stroke-width="1" shape-rendering="crispEdges"/>
<polyline points="934.5,446.8 935.5,446.3 936.5,446.3 937.5,446.8 938.5,446.3 939.5,446.0 940.5,446.5 941.5,446.3 942.5,441.5 943.5,442.9 944.5,446.8 945.5,446.5 946.5,445.5 947.5,447.3 948.5,446.6 949.5,446.6 950.5,446.4 951.5,446.9 952.5,441.1 953.5,442.6 954.5,446.6 955.5,446.4 956.5,445.6 957.5,446.4 958.5,446.9 959.5,446.4 960.5,447.3 961.5,446.6 962.5,446.6 963.5,446.1 964.5,446.6 965.5,446.1 966.5,447.3 967.5,446.9 968.5,446.6" fill="none" stroke="#08fa08" stroke-width="1" shape-rendering="crispEdges"/>
<polyline points="973.5,447.3 974.5,446.6 975.5,446.6 976.5,446.6 977.5,447.3 978.5,446.1 979.5,446.1 980.5,446.9 981.5,441.9 982.5,443.1 983.5,446.4 984.5,446.1 985.5,446.4 986.5,446.6 987.5,446.4 988.5,446.1 989.5,446.1 990.5,447.3 991.5,441.1 992.5,441.4 993.5,446.1 994.5,446.1 995.5,446.1 996.5,447.0 997.5,445.7 998.5,446.5 999.5,446.5 1000.5,445.7 1001.5,446.5 1002.5,447.4 1003.5,446.5 1004.5,446.7 1005.5,447.4 1006.5,447.0 1007.5,446.2 1008.5,446.2" fill="none" stroke="#08fa08" stroke-width="1" shape-rendering="crispEdges"/>
<polyline points="1013.5,445.7 1014.5,445.7 1015.5,446.2 1016.5,446.7 1017.5,447.0 1018.5,446.5 1019.5,447.4 1020.5,446.5 1021.5,439.7 1022.5,441.9 1023.5,446.7 1024.5,447.0 1025.5,447.4 1026.5,446.5 1027.5,446.7 1028.5,447.0 1029.5,447.4 1030.5,446.2 1031.5,442.4 1032.5,441.5 1033.5,446.5 1034.5,445.7 1035.5,445.7 1036.5,445.7 1037.5,447.4 1038.5,446.7 1039.5,446.7 1040.5,446.7 1041.5,446.7 1042.5,446.5 1043.5,446.2 1044.5,446.2 1045.5,446.2 1046.5,445.8 1047.5,446.3 1048.5,446.3" fill="none" stroke="#08fa08" stroke-width="1" shape-rendering="crispEdges"/>
<polyline points="1053.5,445.8 1054.5,446.8 1055.5,445.8 1056.5,446.3 1057.5,447.1 1058.5,446.6 1059.5,445.8 1060.5,447.5 1061.5,438.8 1062.5,440.6 1063.5,446.6 1064.5,446.6 1065.5,446.6 1066.5,446.8 1067.5,446.6 1068.5,446.6 1069.5,446.3 1070.5,446.8 1071.5,440.1 1072.5,440.3 1073.5,447.1 1074.5,447.1 1075.5,445.8 1076.5,447.5 1077.5,446.3 1078.5,446.3 1079.5,446.6 1080.5,446.6 1081.5,446.6 1082.5,447.1 1083.5,446.6 1084.5,446.6 1085.5,446.3 1086.5,446.8 1087.5,446.3 1088.5,445.8" fill="none" stroke="#08fa08" stroke-width="1" shape-rendering="crispEdges"/>
<polyline points="1093.5,445.8 1094.5,447.5 1095.5,447.5 1096.5,447.2 1097.5,447.6 1098.5,447.2 1099.5,446.7 1100.5,446.9 1101.5,438.9 1102.5,439.6 1103.5,446.9 1104.5,446.9 1105.5,446.7 1106.5,447.6 1107.5,447.6 1108.5,446.7 1109.5,446.7 1110.5,445.9 1111.5,440.7 1112.5,441.7 1113.5,447.6 1114.5,446.4 1115.5,447.6 1116.5,446.7 1117.5,446.4 1118.5,446.7 1119.5,446.9 1120.5,447.2 1121.5,446.7 1122.5,447.6 1123.5,446.7 1124.5,447.6 1125.5,446.4 1126.5,446.7 1127.5,446.4" fill="none" stroke="#08fa08" stroke-width="1" shape-rendering="crispEdges"/>
<polyline points="1132.5,446.7 1133.5,446.7 1134.5,446.7 1135.5,445.9 1136.5,445.9 1137.5,446.7 1138.5,447.2 1139.5,446.9 1140.5,435.9 1141.5,437.9 1142.5,446.7 1143.5,447.2 1144.5,446.7 1145.5,446.8 1146.5,446.5 1147.5,447.3 1148.5,446.8 1149.5,447.0 1150.5,439.0 1151.5,440.6 1152.5,446.0 1153.5,446.8 1154.5,447.0 1155.5,446.8 1156.5,447.3 1157.5,446.5 1158.5,447.3 1159.5,446.0 1160.5,447.7 1161.5,446.8 1162.5,447.0 1163.5,446.0 1164.5,446.0 1165.5,447.0 1166.5,446.0 1167.5,447.3" fill="none" stroke="#08fa08" stroke-width="1" shape-rendering="crispEdges"/>
<polyline points="1172.5,447.0 1173.5,446.0 1174.5,447.7 1175.5,446.5 1176.5,447.3 1177.5,446.8 1178.5,446.0 1179.5,446.0 1180.5,433.8 1181.5,435.8 1182.5,446.8 1183.5,446.8 1184.5,447.0 1185.5,447.0 1186.5,447.0 1187.5,446.8 1188.5,447.0 1189.5,447.0 1190.5,440.2 1191.5,439.7 1192.5,447.3 1193.5,446.8 1194.5,447.7 1195.5,447.4 1196.5,446.1 1197.5,447.1 1198.5,447.1 1199.5,447.4 1200.5,447.8 1201.5,446.1 1202.5,446.9 1203.5,446.6 1204.5,446.9 1205.5,446.9 1206.5,446.6 1207.5,447.8" fill="none" stroke="#08fa08" stroke-width="1" shape-rendering="crispEdges"/>
<polyline points="1212.5,446.1 1213.5,446.9 1214.5,446.9 1215.5,446.9 1216.5,446.9 1217.5,447.1 1218.5,446.9 1219.5,447.1 1220.5,430.9 1221.5,433.3 1222.5,447.1 1223.5,446.9 1224.5,446.9 1225.5,447.4 1226.5,446.9 1227.5,447.1 1228.5,446.9 1229.5,447.4 1230.5,439.9 1231.5,441.0 1232.5,446.9 1233.5,446.1 1234.5,446.1 1235.5,447.8 1236.5,446.6 1237.5,447.1 1238.5,446.1 1239.5,447.4 1240.5,446.6 1241.5,446.9 1242.5,447.8 1243.5,447.4 1244.5,446.9 1245.5,446.2 1246.5,447.0 1247.5,447.5" fill="none" stroke="#08fa08" stroke-width="1" shape-rendering="crispEdges"/>
<polyline points="1252.5,447.0 1253.5,446.2 1254.5,447.9 1255.5,446.7 1256.5,447.0 1257.5,447.5 1258.5,447.0 1259.5,447.0 1260.5,427.9 1261.5,429.7 1262.5,446.2 1263.5,447.2 1264.5,446.2 1265.5,447.9 1266.5,447.5 1267.5,439.5 1268.5,431.7" fill="none" stroke="#08fa08" stroke-width="1" shape-rendering="crispEdges"/>
<g fill="#08fc08" shape-rendering="crispEdges">
<rect x="294" y="86" width="2" height="150"/>
<rect x="293" y="222" width="1" height="224"/>
<rect x="296" y="236" width="1" height="211"/>
<rect x="334" y="138" width="2" height="60"/>
<rect x="334" y="190" width="1" height="256"/>
<rect x="336" y="198" width="1" height="249"/>
<rect x="374" y="162" width="2" height="156"/>
<rect x="373" y="318" width="1" height="128"/>
<rect x="376" y="307" width="1" height="140"/>
<rect x="414" y="178" width="2" height="92"/>
<rect x="414" y="270" width="1" height="176"/>
<rect x="416" y="255" width="1" height="192"/>
<rect x="454" y="189" width="2" height="146"/>
<rect x="454" y="320" width="1" height="126"/>
<rect x="456" y="335" width="1" height="112"/>
<rect x="493" y="199" width="2" height="79"/>
<rect x="493" y="278" width="1" height="168"/>
<rect x="495" y="267" width="1" height="180"/>
<rect x="533" y="207" width="2" height="143"/>
<rect x="532" y="340" width="1" height="107"/>
<rect x="535" y="350" width="1" height="98"/>
<rect x="573" y="214" width="2" height="83"/>
<rect x="573" y="289" width="1" height="158"/>
<rect x="575" y="297" width="1" height="151"/>
<rect x="613" y="220" width="2" height="156"/>
<rect x="613" y="376" width="1" height="71"/>
<rect x="615" y="374" width="1" height="74"/>
<rect x="652" y="225" width="2" height="211"/>
<rect x="652" y="428" width="1" height="19"/>
<rect x="654" y="436" width="1" height="12"/>
<rect x="692" y="230" width="2" height="148"/>
<rect x="691" y="363" width="1" height="84"/>
<rect x="694" y="378" width="1" height="70"/>
<rect x="732" y="234" width="2" height="75"/>
<rect x="732" y="309" width="1" height="138"/>
<rect x="734" y="309" width="1" height="139"/>
<rect x="772" y="238" width="2" height="72"/>
<rect x="772" y="310" width="1" height="137"/>
<rect x="774" y="307" width="1" height="141"/>
<rect x="811" y="242" width="2" height="163"/>
<rect x="811" y="405" width="1" height="42"/>
<rect x="813" y="394" width="1" height="54"/>
<rect x="851" y="245" width="2" height="169"/>
<rect x="850" y="413" width="1" height="34"/>
<rect x="853" y="414" width="1" height="34"/>
<rect x="891" y="248" width="2" height="173"/>
<rect x="891" y="417" width="1" height="30"/>
<rect x="893" y="421" width="1" height="27"/>
<rect x="931" y="251" width="2" height="110"/>
<rect x="931" y="361" width="1" height="86"/>
<rect x="933" y="360" width="1" height="88"/>
<rect x="970" y="254" width="2" height="88"/>
<rect x="970" y="342" width="1" height="105"/>
<rect x="972" y="341" width="1" height="107"/>
<rect x="1010" y="257" width="2" height="101"/>
<rect x="1009" y="358" width="1" height="89"/>
<rect x="1012" y="352" width="1" height="96"/>
<rect x="1050" y="259" width="2" height="117"/>
<rect x="1050" y="362" width="1" height="86"/>
<rect x="1052" y="376" width="1" height="73"/>
<rect x="1090" y="262" width="2" height="90"/>
<rect x="1090" y="352" width="1" height="96"/>
<rect x="1092" y="336" width="1" height="113"/>
<rect x="1129" y="264" width="2" height="55"/>
<rect x="1129" y="319" width="1" height="129"/>
<rect x="1131" y="301" width="1" height="148"/>
<rect x="1169" y="266" width="2" height="74"/>
<rect x="1168" y="340" width="1" height="108"/>
<rect x="1171" y="338" width="1" height="111"/>
<rect x="1209" y="268" width="2" height="94"/>
<rect x="1209" y="362" width="1" height="86"/>
<rect x="1211" y="345" width="1" height="104"/>
<rect x="1249" y="270" width="2" height="119"/>
<rect x="1249" y="389" width="1" height="59"/>
<rect x="1251" y="373" width="1" height="76"/>
<rect x="315" y="434" width="1" height="12"/>
<rect x="316" y="436" width="1" height="10"/>
<rect x="355" y="440" width="1" height="6"/>
<rect x="356" y="441" width="1" height="5"/>
<rect x="474" y="441" width="1" height="5"/>
<rect x="475" y="442" width="1" height="4"/>
<rect x="514" y="441" width="1" height="5"/>
<rect x="515" y="442" width="1" height="4"/>
<rect x="554" y="442" width="1" height="5"/>
<rect x="555" y="442" width="1" height="4"/>
<rect x="594" y="442" width="1" height="5"/>
<rect x="595" y="442" width="1" height="4"/>
<rect x="633" y="442" width="1" height="5"/>
<rect x="634" y="442" width="1" height="4"/>
<rect x="673" y="442" width="1" height="5"/>
<rect x="674" y="442" width="1" height="4"/>
<rect x="713" y="442" width="1" height="5"/>
<rect x="714" y="442" width="1" height="4"/>
<rect x="753" y="442" width="1" height="5"/>
<rect x="754" y="443" width="1" height="4"/>
<rect x="792" y="442" width="1" height="5"/>
<rect x="793" y="443" width="1" height="4"/>
<rect x="832" y="442" width="1" height="5"/>
<rect x="833" y="443" width="1" height="4"/>
<rect x="872" y="441" width="1" height="6"/>
<rect x="873" y="442" width="1" height="5"/>
<rect x="912" y="441" width="1" height="6"/>
<rect x="913" y="442" width="1" height="5"/>
<rect x="952" y="441" width="1" height="6"/>
<rect x="953" y="442" width="1" height="5"/>
<rect x="991" y="441" width="1" height="6"/>
<rect x="992" y="442" width="1" height="5"/>
<rect x="1031" y="442" width="1" height="6"/>
<rect x="1032" y="442" width="1" height="5"/>
<rect x="1071" y="440" width="1" height="8"/>
<rect x="1072" y="441" width="1" height="7"/>
<rect x="1111" y="440" width="1" height="8"/>
<rect x="1112" y="441" width="1" height="7"/>
<rect x="1150" y="439" width="1" height="8"/>
<rect x="1151" y="440" width="1" height="7"/>
<rect x="1190" y="439" width="1" height="8"/>
<rect x="1191" y="440" width="1" height="7"/>
<rect x="1230" y="439" width="1" height="8"/>
<rect x="1231" y="441" width="1" height="7"/>
<rect x="942" y="442" width="1" height="5"/>
<rect x="943" y="443" width="1" height="4"/>
<rect x="981" y="441" width="1" height="6"/>
<rect x="982" y="442" width="1" height="5"/>
<rect x="1021" y="441" width="1" height="7"/>
<rect x="1022" y="441" width="1" height="6"/>
<rect x="1061" y="440" width="1" height="8"/>
<rect x="1062" y="441" width="1" height="7"/>
<rect x="1101" y="439" width="1" height="9"/>
<rect x="1102" y="440" width="1" height="8"/>
<rect x="1140" y="437" width="1" height="11"/>
<rect x="1141" y="438" width="1" height="10"/>
<rect x="1180" y="434" width="1" height="14"/>
<rect x="1181" y="436" width="1" height="12"/>
<rect x="1220" y="431" width="1" height="17"/>
<rect x="1221" y="433" width="1" height="15"/>
<rect x="1260" y="427" width="1" height="21"/>
<rect x="1261" y="430" width="1" height="18"/>
</g>
<polygon points="276.5,470 273,478 280,478" fill="#10f810"/>
<path d="M266,118 H276 V120 H267 V121 H266 Z" fill="#08fc08" shape-rendering="crispEdges"/>
<text x="260.8" y="115.8" font-size="9.5" fill="#08f808">Sp.</text>
<line x1="1091.5" y1="38" x2="1091.5" y2="466" stroke="#ffffff" stroke-width="1.4" stroke-dasharray="9 6 3 6"/>
<g transform="translate(296.0,86.4)"><circle r="11" fill="none" stroke="#8888f8" stroke-width="1.15"/><path d="M-4.8,-4.8L-1.8,-1.8M4.8,-4.8L1.8,-1.8M-4.8,4.8L-1.8,1.8M4.8,4.8L1.8,1.8" stroke="#b4b4f8" stroke-width="1.1" fill="none"/><text class="pk" transform="translate(-1.6,-20.4) rotate(-20)">1.00 MHz</text></g>
<g transform="translate(335.7,137.8)"><circle r="11" fill="none" stroke="#8888f8" stroke-width="1.15"/><path d="M-4.8,-4.8L-1.8,-1.8M4.8,-4.8L1.8,-1.8M-4.8,4.8L-1.8,1.8M4.8,4.8L1.8,1.8" stroke="#b4b4f8" stroke-width="1.1" fill="none"/><text class="pk" transform="translate(-1.6,-20.4) rotate(-20)">3.00 MHz</text></g>
<g transform="translate(375.5,161.7)"><circle r="11" fill="none" stroke="#8888f8" stroke-width="1.15"/><path d="M-4.8,-4.8L-1.8,-1.8M4.8,-4.8L1.8,-1.8M-4.8,4.8L-1.8,1.8M4.8,4.8L1.8,1.8" stroke="#b4b4f8" stroke-width="1.1" fill="none"/><text class="pk" transform="translate(-1.6,-20.4) rotate(-20)">5.00 MHz</text></g>
<g transform="translate(415.3,177.5)"><circle r="11" fill="none" stroke="#8888f8" stroke-width="1.15"/><path d="M-4.8,-4.8L-1.8,-1.8M4.8,-4.8L1.8,-1.8M-4.8,4.8L-1.8,1.8M4.8,4.8L1.8,1.8" stroke="#b4b4f8" stroke-width="1.1" fill="none"/><text class="pk" transform="translate(-1.6,-20.4) rotate(-20)">7.00 MHz</text></g>
<g transform="translate(455.0,189.5)"><circle r="11" fill="none" stroke="#8888f8" stroke-width="1.15"/><path d="M-4.8,-4.8L-1.8,-1.8M4.8,-4.8L1.8,-1.8M-4.8,4.8L-1.8,1.8M4.8,4.8L1.8,1.8" stroke="#b4b4f8" stroke-width="1.1" fill="none"/><text class="pk" transform="translate(-1.6,-20.4) rotate(-20)">9.00 MHz</text></g>
<g transform="translate(494.8,199.0)"><circle r="11" fill="none" stroke="#8888f8" stroke-width="1.15"/><path d="M-4.8,-4.8L-1.8,-1.8M4.8,-4.8L1.8,-1.8M-4.8,4.8L-1.8,1.8M4.8,4.8L1.8,1.8" stroke="#b4b4f8" stroke-width="1.1" fill="none"/><text class="pk" transform="translate(-1.6,-20.4) rotate(-20)">11.00 MHz</text></g>
<g transform="translate(534.5,206.9)"><circle r="11" fill="none" stroke="#8888f8" stroke-width="1.15"/><path d="M-4.8,-4.8L-1.8,-1.8M4.8,-4.8L1.8,-1.8M-4.8,4.8L-1.8,1.8M4.8,4.8L1.8,1.8" stroke="#b4b4f8" stroke-width="1.1" fill="none"/><text class="pk" transform="translate(-1.6,-20.4) rotate(-20)">13.00 MHz</text></g>
<g transform="translate(574.3,213.8)"><circle r="11" fill="none" stroke="#8888f8" stroke-width="1.15"/><path d="M-4.8,-4.8L-1.8,-1.8M4.8,-4.8L1.8,-1.8M-4.8,4.8L-1.8,1.8M4.8,4.8L1.8,1.8" stroke="#b4b4f8" stroke-width="1.1" fill="none"/><text class="pk" transform="translate(-1.6,-20.4) rotate(-20)">15.00 MHz</text></g>
<g transform="translate(614.1,219.7)"><circle r="11" fill="none" stroke="#8888f8" stroke-width="1.15"/><path d="M-4.8,-4.8L-1.8,-1.8M4.8,-4.8L1.8,-1.8M-4.8,4.8L-1.8,1.8M4.8,4.8L1.8,1.8" stroke="#b4b4f8" stroke-width="1.1" fill="none"/><text class="pk" transform="translate(-1.6,-20.4) rotate(-20)">17.00 MHz</text></g>
<g transform="translate(653.8,225.0)"><circle r="11" fill="none" stroke="#8888f8" stroke-width="1.15"/><path d="M-4.8,-4.8L-1.8,-1.8M4.8,-4.8L1.8,-1.8M-4.8,4.8L-1.8,1.8M4.8,4.8L1.8,1.8" stroke="#b4b4f8" stroke-width="1.1" fill="none"/><text class="pk" transform="translate(-1.6,-20.4) rotate(-20)">19.00 MHz</text></g>
<g transform="translate(693.6,229.8)"><circle r="11" fill="none" stroke="#8888f8" stroke-width="1.15"/><path d="M-4.8,-4.8L-1.8,-1.8M4.8,-4.8L1.8,-1.8M-4.8,4.8L-1.8,1.8M4.8,4.8L1.8,1.8" stroke="#b4b4f8" stroke-width="1.1" fill="none"/><text class="pk" transform="translate(-1.6,-20.4) rotate(-20)">21.00 MHz</text></g>
<g transform="translate(733.3,234.1)"><circle r="11" fill="none" stroke="#8888f8" stroke-width="1.15"/><path d="M-4.8,-4.8L-1.8,-1.8M4.8,-4.8L1.8,-1.8M-4.8,4.8L-1.8,1.8M4.8,4.8L1.8,1.8" stroke="#b4b4f8" stroke-width="1.1" fill="none"/><text class="pk" transform="translate(-1.6,-20.4) rotate(-20)">23.00 MHz</text></g>
<g transform="translate(773.1,238.1)"><circle r="11" fill="none" stroke="#8888f8" stroke-width="1.15"/><path d="M-4.8,-4.8L-1.8,-1.8M4.8,-4.8L1.8,-1.8M-4.8,4.8L-1.8,1.8M4.8,4.8L1.8,1.8" stroke="#b4b4f8" stroke-width="1.1" fill="none"/><text class="pk" transform="translate(-1.6,-20.4) rotate(-20)">25.00 MHz</text></g>
<g transform="translate(812.9,241.7)"><circle r="11" fill="none" stroke="#8888f8" stroke-width="1.15"/><path d="M-4.8,-4.8L-1.8,-1.8M4.8,-4.8L1.8,-1.8M-4.8,4.8L-1.8,1.8M4.8,4.8L1.8,1.8" stroke="#b4b4f8" stroke-width="1.1" fill="none"/><text class="pk" transform="translate(-1.6,-20.4) rotate(-20)">27.00 MHz</text></g>
<g transform="translate(852.6,245.1)"><circle r="11" fill="none" stroke="#8888f8" stroke-width="1.15"/><path d="M-4.8,-4.8L-1.8,-1.8M4.8,-4.8L1.8,-1.8M-4.8,4.8L-1.8,1.8M4.8,4.8L1.8,1.8" stroke="#b4b4f8" stroke-width="1.1" fill="none"/><text class="pk" transform="translate(-1.6,-20.4) rotate(-20)">29.00 MHz</text></g>
<g transform="translate(892.4,248.3)"><circle r="11" fill="none" stroke="#8888f8" stroke-width="1.15"/><path d="M-4.8,-4.8L-1.8,-1.8M4.8,-4.8L1.8,-1.8M-4.8,4.8L-1.8,1.8M4.8,4.8L1.8,1.8" stroke="#b4b4f8" stroke-width="1.1" fill="none"/><text class="pk" transform="translate(-1.6,-20.4) rotate(-20)">31.00 MHz</text></g>
<g transform="translate(932.1,251.3)"><circle r="11" fill="none" stroke="#8888f8" stroke-width="1.15"/><path d="M-4.8,-4.8L-1.8,-1.8M4.8,-4.8L1.8,-1.8M-4.8,4.8L-1.8,1.8M4.8,4.8L1.8,1.8" stroke="#b4b4f8" stroke-width="1.1" fill="none"/><text class="pk" transform="translate(-1.6,-20.4) rotate(-20)">33.00 MHz</text></g>
<g transform="translate(971.9,254.1)"><circle r="11" fill="none" stroke="#8888f8" stroke-width="1.15"/><path d="M-4.8,-4.8L-1.8,-1.8M4.8,-4.8L1.8,-1.8M-4.8,4.8L-1.8,1.8M4.8,4.8L1.8,1.8" stroke="#b4b4f8" stroke-width="1.1" fill="none"/><text class="pk" transform="translate(-1.6,-20.4) rotate(-20)">35.00 MHz</text></g>
<g transform="translate(1011.7,256.8)"><circle r="11" fill="none" stroke="#8888f8" stroke-width="1.15"/><path d="M-4.8,-4.8L-1.8,-1.8M4.8,-4.8L1.8,-1.8M-4.8,4.8L-1.8,1.8M4.8,4.8L1.8,1.8" stroke="#b4b4f8" stroke-width="1.1" fill="none"/><text class="pk" transform="translate(-1.6,-20.4) rotate(-20)">37.00 MHz</text></g>
<g transform="translate(1051.4,259.3)"><circle r="11" fill="none" stroke="#8888f8" stroke-width="1.15"/><path d="M-4.8,-4.8L-1.8,-1.8M4.8,-4.8L1.8,-1.8M-4.8,4.8L-1.8,1.8M4.8,4.8L1.8,1.8" stroke="#b4b4f8" stroke-width="1.1" fill="none"/><text class="pk" transform="translate(-1.6,-20.4) rotate(-20)">39.00 MHz</text></g>
</svg>
<div class="info" style="left:4px;top:480px;width:97px;height:56px">
<span style="left:0;top:0;width:42px;height:12px;background:#00fc00;color:#000;border-radius:2px;padding-left:1px;box-sizing:border-box;line-height:12px">SpecAn</span>
<span style="right:0px;top:14px">10.0 dB/div</span>
<span style="right:0px;top:27px">5.00 MHz/div</span>
<span style="right:0px;top:40px">6.079 k#</span>
</div>
<div class="info" style="left:1064px;top:480px;width:111px;height:43px">
<span style="left:0px;top:0px;width:107px;height:12px;background:#fff;border-radius:2px 2px 0 0"></span>
<span style="left:1px;top:0px;color:#000">Timebase</span><span style="right:1px;top:0px;color:#000">0.0 µs</span>
<span style="right:0px;top:14px">10.0 µs/div</span>
<span style="left:0px;top:27px">25.0 kS</span><span style="right:1px;top:27px">250 MS/s</span>
</div>
<div class="info" style="left:1178px;top:480px;width:98px;height:43px">
<span style="left:0px;top:0px;width:94px;height:12px;background:#fff;border-radius:2px 2px 0 0"></span>
<span style="left:1px;top:0px;color:#000">Trigger</span>
<span style="left:59px;top:1px;width:15px;height:10px;background:#000;border-radius:3px;color:#fff;font-size:9px;line-height:10px;text-align:center">C1</span>
<span style="left:75px;top:1px;width:17px;height:10px;background:#000;border-radius:3px;color:#fff;font-size:9px;line-height:10px;text-align:center">DC</span>
<span style="left:1px;top:14px">Normal</span><span style="right:0px;top:14px">0 mV</span>
<span style="left:1px;top:27px">Edge</span><span style="right:0px;top:27px">Positive</span>
</div>
<div class="btn" style="left:1232px;top:540px;width:45px;height:31px;font-size:12.2px;line-height:15px;padding-top:2px">Close</div>
<div id="panel"></div>
<div id="tab">Spectrum Analyzer</div>

<div class="box" style="left:16px;top:585px;width:69px;height:39px"></div>
<div class="lbl" style="left:16px;top:586px;width:69px">Enable</div>
<div class="chk" style="left:42px;top:605px"><svg width="14" height="14" viewBox="0 0 14 14"><path d="M1.7,6.9 L5.4,10.7 L12.3,3.2" fill="none" stroke="#12c412" stroke-width="3"/></svg></div>
<div class="lbl" style="left:13px;top:645px;width:100px">Source Trace</div>
<div class="fld dark" style="left:16px;top:660px;width:96px;height:20px">C1</div>
<div class="lbl" style="left:13px;top:697px;width:100px">Window</div>
<div class="fld" style="left:16px;top:712px;width:96px;height:20px">Flat Top</div>
<div class="sep" style="left:132px"></div>

<div class="hd" style="left:163px;top:575px;width:160px">Frequency &amp; Span</div>
<div class="btn" style="left:150px;top:606px;width:83px;height:44px;line-height:15px;padding-top:1px">Center<br>Span</div>
<div class="btn on" style="left:150px;top:652px;width:83px;height:44px;line-height:15px;padding-top:3px">Start<br>Stop</div>
<div class="lbl" style="left:251px;top:609px;width:100px">Start Freq.</div>
<div class="fld" style="left:256px;top:624px;width:90px;height:20px">0.0 kHz</div>
<div class="lbl" style="left:251px;top:656px;width:100px">Stop Freq.</div>
<div class="fld" style="left:256px;top:671px;width:90px;height:20px">50.0000 MHz</div>
<div class="lbl g" style="left:149px;top:716px;text-align:left">Max. Freq :</div>
<div class="lbl g" style="left:223px;top:716px;text-align:left">125.000000 MHz</div>
<div class="sep" style="left:366px"></div>

<div class="hd" style="left:388px;top:575px;width:160px">Resolution Bandwidth</div>
<div class="box" style="left:383px;top:637px;width:69px;height:39px"></div>
<div class="lbl" style="left:383px;top:638px;width:69px">Auto</div>
<div class="chk" style="left:409px;top:657px"><svg width="14" height="14" viewBox="0 0 14 14"><path d="M1.7,6.9 L5.4,10.7 L12.3,3.2" fill="none" stroke="#12c412" stroke-width="3"/></svg></div>
<div class="lbl g" style="left:455px;top:638px;width:100px">Resolution BW</div>
<div class="fld dis" style="left:458px;top:653px;width:95px;height:20px">100 kHz</div>
<div class="lbl g" style="left:383px;top:716px;text-align:left">Actual :</div>
<div class="lbl g" style="left:455px;top:716px;text-align:left">52.3963 kHz</div>
<div class="sep" style="left:566px"></div>

<div class="hd" style="left:600px;top:575px;width:120px">Mode</div>
<div class="btn" style="left:585px;top:618px;width:49px;height:36px;line-height:15px">Normal</div>
<div class="btn on" style="left:636px;top:618px;width:49px;height:36px;line-height:15px;font-size:12px;padding-top:2px">Average</div>
<div class="btn" style="left:687px;top:618px;width:49px;height:36px;line-height:15px;padding-top:2px">Max<br>Hold</div>
<div class="lbl" style="left:607px;top:658px;width:100px">Averages</div>
<div class="fld" style="left:596px;top:673px;width:123px;height:20px">1000</div>
<div class="sep" style="left:752px"></div>

<div class="hd" style="left:775px;top:575px;width:120px">Scale</div>
<div class="lbl" style="left:776px;top:608px;width:120px">Reference Level</div>
<div class="fld" style="left:778px;top:622px;width:117px;height:20px">15.0000 dBm</div>
<div class="lbl" style="left:776px;top:671px;width:120px">Scale</div>
<div class="fld" style="left:778px;top:686px;width:117px;height:20px">10.0 dB</div>
<div class="sep" style="left:923px"></div>

<div class="hd" style="left:959px;top:575px;width:120px">Markers</div>
<div class="abs" style="left:962px;top:620px;width:117px;height:35px;background:#ffff00"></div>
<div class="lbl" style="left:962px;top:621px;width:117px;color:#7a7a50">Reference Freq.</div>
<div class="fld" style="left:962px;top:635px;width:117px;height:20px">41.000000 MHz</div>
<div class="btn" style="left:974px;top:678px;width:93px;height:36px;line-height:15px;padding-top:2px">Marker -&gt;<br>Center Freq.</div>
<div class="sep" style="left:1113px"></div>

<div class="hd" style="left:1138px;top:575px;width:120px">Peak Search</div>
<div class="box" style="left:1157px;top:616px;width:78px;height:39px"></div>
<div class="lbl" style="left:1157px;top:617px;width:78px">Show Peaks</div>
<div class="chk" style="left:1188px;top:636px"><svg width="14" height="14" viewBox="0 0 14 14"><path d="M1.7,6.9 L5.4,10.7 L12.3,3.2" fill="none" stroke="#12c412" stroke-width="3"/></svg></div>
<div class="lbl" style="left:1146px;top:679px;width:100px">Max. Peaks</div>
<div class="fld" style="left:1159px;top:694px;width:75px;height:20px">20</div>

<a class="abs" style="left:10px;top:750px;font-size:16px;line-height:18px;color:#0000ff;text-decoration:underline;text-decoration-thickness:1.6px;-webkit-text-stroke:0.35px #0000ff">LeCroy</a>
<div class="abs" style="left:1158px;top:753px;font-size:12.3px;line-height:14px;color:#fff;white-space:nowrap">09.04.2009 3:44:16</div>
</body></html>
